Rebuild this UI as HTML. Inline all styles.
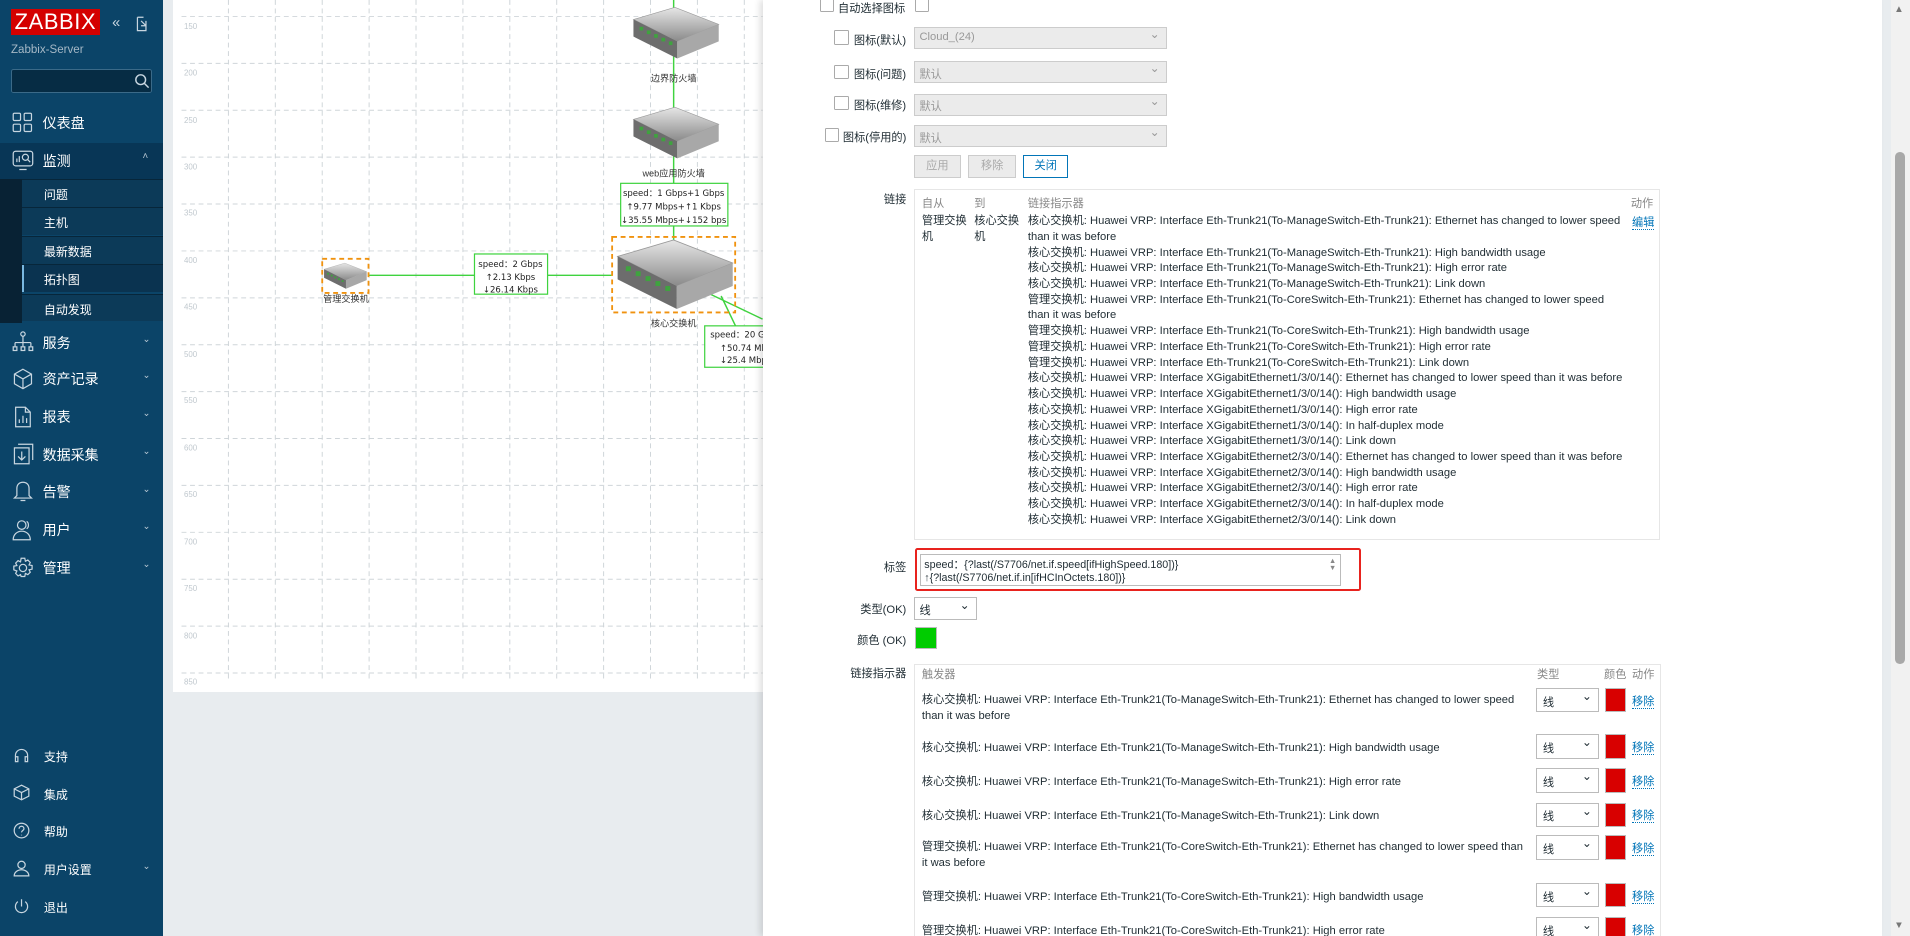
<!DOCTYPE html>
<html><head><meta charset="utf-8"><style>
html,body{margin:0;padding:0;overflow:hidden;background:#e8ecef;}
#w{zoom:1.21812;position:relative;width:1568px;height:768px;overflow:hidden;font-family:"Liberation Sans","Noto Sans CJK SC",sans-serif;font-size:9.85px;color:#1f2c33;background:#e8ecef;}
.a{position:absolute;white-space:nowrap;}
#sb{position:absolute;left:0;top:0;width:134px;height:768px;background:#0b4468;color:#fff;}
.mi{position:absolute;left:0;width:134px;height:30px;font-size:11.5px;}
.mi span{position:absolute;left:35px;top:7px;}
.mi svg{position:absolute;left:10px;top:6px;}
.mi .ch{position:absolute;left:117px;top:8px;font-size:8px;color:#b8c8d4;}
.sub{position:absolute;left:18px;width:116px;height:22px;background:#0c3a58;border-top:1px solid #07263a;font-size:9.85px;}
.sub span{position:absolute;left:18px;top:5px;}
.bm{position:absolute;left:0;width:134px;height:30px;font-size:9.85px;}
.bm span{position:absolute;left:36px;top:8px;}
.bm svg{position:absolute;left:11px;top:7px;}
#map{position:absolute;left:142px;top:0;width:484px;height:568px;background:#fff;}
#form{position:absolute;left:626px;top:0;width:919px;height:768px;background:#fff;box-shadow:-3px 0 5px rgba(0,0,0,.12);font-size:9.2px;}
.cb{position:absolute;width:10px;height:10px;border:1px solid #aaa;background:#fff;border-radius:1px;}
.sel{position:absolute;height:18px;border:1px solid #ccc;background:#ebebeb;color:#999;box-sizing:border-box;padding:3px 4px;}
.sel:after{content:"⌄";position:absolute;right:5px;top:-1px;font-size:10px;color:#999;}
.lbl{position:absolute;text-align:right;width:120px;}
.btn{position:absolute;height:19px;box-sizing:border-box;border:1px solid #ccc;background:#ebebeb;color:#aaa;text-align:center;line-height:17px;}
.tbl{position:absolute;border:1px solid #e6e6e6;background:#fff;}
.hd{color:#888;}
.lk{color:#0275b8;border-bottom:1px dotted #0275b8;}
.ws{position:absolute;height:20px;width:52px;border:1px solid #bbb;background:#fff;box-sizing:border-box;padding:4px 5px;}
.ws:after{content:"⌄";position:absolute;right:5px;top:0px;font-size:10px;}
.rq{position:absolute;width:17px;height:20px;background:#d80000;border:1px solid #bbb;box-sizing:border-box;}
</style></head><body><div id="w">

<div id="sb">
  <div class="a" style="left:9px;top:7px;width:73px;height:22px;background:#d40000;color:#fff;font-size:18px;line-height:22px;text-align:center;letter-spacing:0.5px;">ZABBIX</div>
  <div class="a" style="left:92px;top:12px;font-size:12px;color:#c8d6e0;">«</div>
  <svg class="a" style="left:111px;top:13px" width="11" height="13" viewBox="0 0 11 13" fill="none" stroke="#c8d6e0" stroke-width="1"><path d="M2 1h5M2 1v11h7V5M5 4l4 4M9 4v4H5"/></svg>
  <div class="a" style="left:9px;top:36px;font-size:9.5px;color:#a5b8c6;">Zabbix-Server</div>
  <div class="a" style="left:9px;top:57px;width:116px;height:19px;background:#062c44;border:1px solid #3b6a88;box-sizing:border-box;border-radius:2px;"></div>
  <svg class="a" style="left:110px;top:60px" width="13" height="13" viewBox="0 0 13 13" fill="none" stroke="#c8d6e0" stroke-width="1.2"><circle cx="5.5" cy="5.5" r="4"/><path d="M8.5 8.5l3.5 3.5"/></svg>

  <div class="mi" style="top:86px"><svg width="18" height="18" viewBox="0 0 18 18" fill="none" stroke="#c8d6e0"><rect x="1" y="1" width="6" height="6" rx="1"/><rect x="10" y="1" width="6" height="6" rx="1"/><rect x="1" y="10" width="6" height="6" rx="1"/><rect x="10" y="10" width="6" height="6" rx="1"/></svg><span>仪表盘</span></div>
  <div class="mi" style="top:117px;background:#083656;height:30px"><svg width="18" height="18" viewBox="0 0 18 18" fill="none" stroke="#c8d6e0"><rect x="1" y="1" width="16" height="12" rx="2"/><path d="M6 16h6M4 10V7M6 10V5"/><circle cx="11" cy="6" r="2.5"/><path d="M13 8l2 2"/></svg><span>监测</span><div class="ch" style="top:7px">˄</div></div>
  <div class="a" style="left:0;top:147px;width:18px;height:118px;background:#082234;"></div>
  <div class="sub" style="top:147px"><span>问题</span></div>
  <div class="sub" style="top:170px"><span>主机</span></div>
  <div class="sub" style="top:194px"><span>最新数据</span></div>
  <div class="sub" style="top:217px;background:#0a3350"><span>拓扑图</span><div class="a" style="left:0;top:0;width:2px;height:22px;background:#7ab8e0"></div></div>
  <div class="sub" style="top:241px"><span>自动发现</span></div>

  <div class="mi" style="top:266px"><svg width="18" height="18" viewBox="0 0 18 18" fill="none" stroke="#c8d6e0"><circle cx="9" cy="2.5" r="1.8"/><path d="M9 4.5v5M2.5 9.5h13M2.5 9.5v3M9 9.5v3M15.5 9.5v3"/><rect x="1" y="13" width="3" height="3"/><rect x="7.5" y="13" width="3" height="3"/><rect x="14" y="13" width="3" height="3"/></svg><span>服务</span><div class="ch">⌄</div></div>
  <div class="mi" style="top:296px"><svg width="18" height="18" viewBox="0 0 18 18" fill="none" stroke="#c8d6e0"><path d="M9 1l7 4v8l-7 4-7-4V5zM2 5l7 4 7-4M9 9v8"/></svg><span>资产记录</span><div class="ch">⌄</div></div>
  <div class="mi" style="top:327px"><svg width="18" height="18" viewBox="0 0 18 18" fill="none" stroke="#c8d6e0"><path d="M3 1h8l4 4v12H3zM11 1v4h4M6 14v-3M9 14V8M12 14v-4"/></svg><span>报表</span><div class="ch">⌄</div></div>
  <div class="mi" style="top:358px"><svg width="18" height="18" viewBox="0 0 18 18" fill="none" stroke="#c8d6e0"><path d="M2 4h12v13H2zM5 1h12v13M8 7v7M5 11l3 3 3-3"/></svg><span>数据采集</span><div class="ch">⌄</div></div>
  <div class="mi" style="top:389px"><svg width="18" height="18" viewBox="0 0 18 18" fill="none" stroke="#c8d6e0"><path d="M9 1c-3 0-5 2-5 5v6l-2 2h14l-2-2V6c0-3-2-5-5-5zM7 16h4"/></svg><span>告警</span><div class="ch">⌄</div></div>
  <div class="mi" style="top:420px"><svg width="18" height="18" viewBox="0 0 18 18" fill="none" stroke="#c8d6e0"><circle cx="8" cy="5" r="3.5"/><path d="M1 17c0-4 3-7 7-7s7 3 7 7zM12 2c2 1 2 5 0 6"/></svg><span>用户</span><div class="ch">⌄</div></div>
  <div class="mi" style="top:451px"><svg width="18" height="18" viewBox="0 0 18 18" fill="none" stroke="#c8d6e0"><circle cx="9" cy="9" r="3"/><path d="M7.5 1h3l.5 2.5 2-1 2 2-1 2 2.5.5v3l-2.5.5 1 2-2 2-2-1-.5 2.5h-3L7 14.5l-2 1-2-2 1-2L1.5 10.5v-3L4 7 3 5l2-2 2 1z"/></svg><span>管理</span><div class="ch">⌄</div></div>

  <div class="bm" style="top:606px"><svg width="14" height="14" viewBox="0 0 14 14" fill="none" stroke="#c8d6e0"><path d="M2 9V7a5 5 0 0110 0v2M2 8h2v4H2zM10 8h2v4h-2z"/></svg><span>支持</span></div>
  <div class="bm" style="top:637px"><svg width="14" height="14" viewBox="0 0 14 14" fill="none" stroke="#c8d6e0"><path d="M7 1l6 3v6l-6 3-6-3V4zM1 4l6 3 6-3M7 7v6"/></svg><span>集成</span></div>
  <div class="bm" style="top:668px"><svg width="14" height="14" viewBox="0 0 14 14" fill="none" stroke="#c8d6e0"><circle cx="7" cy="7" r="6"/><path d="M5 5.5a2 2 0 114 0c0 1.5-2 1.5-2 3M7 10.5v.5"/></svg><span>帮助</span></div>
  <div class="bm" style="top:699px"><svg width="14" height="14" viewBox="0 0 14 14" fill="none" stroke="#c8d6e0"><circle cx="7" cy="4" r="3"/><path d="M1 13c0-3 3-5 6-5s6 2 6 5z"/></svg><span>用户设置</span><div class="ch" style="position:absolute;left:117px;top:8px;font-size:8px;color:#b8c8d4">⌄</div></div>
  <div class="bm" style="top:730px"><svg width="14" height="14" viewBox="0 0 14 14" fill="none" stroke="#c8d6e0"><path d="M7 1v6M4 3a5 5 0 106 0"/></svg><span>退出</span></div>
</div>

<div id="map">
<svg width="484" height="568" style="position:absolute;left:0;top:0">
  <g stroke="#cfd5d9" stroke-dasharray="4,3" stroke-width="0.8">
    <path d="M7 13.5H484M7 52H484M7 90.5H484M7 129H484M7 167.5H484M7 206H484M7 244.5H484M7 283H484M7 321.5H484M7 360H484M7 398.5H484M7 437H484M7 475.5H484M7 514H484M7 552.5H484"/>
    <path d="M45.5 0V560M84 0V560M122.5 0V560M161 0V560M199.5 0V560M238 0V560M276.5 0V560M315 0V560M353.5 0V560M392 0V560M430.5 0V560M469 0V560"/>
  </g>
  <g font-size="6.5" fill="#c0c8ce" font-family="Liberation Sans">
    <text x="9" y="24">150</text><text x="9" y="62">200</text><text x="9" y="101">250</text><text x="9" y="139">300</text><text x="9" y="177">350</text><text x="9" y="216">400</text><text x="9" y="254">450</text><text x="9" y="293">500</text><text x="9" y="331">550</text><text x="9" y="370">600</text><text x="9" y="408">650</text><text x="9" y="447">700</text><text x="9" y="485">750</text><text x="9" y="524">800</text><text x="9" y="562">850</text>
  </g>
  <g stroke="#3fd33f" stroke-width="1.2" fill="none">
    <path d="M411 0V200M161 226H360M438 240L484 262M450 243L462 268"/>
  </g>
  <defs>
    <linearGradient id="g1" x1="0" y1="0" x2="0" y2="1"><stop offset="0" stop-color="#e6e6e6"/><stop offset="1" stop-color="#8a8a8a"/></linearGradient>
    <g id="sw">
      <path d="M378 16l34-10 36 14-34 14z" fill="url(#g1)" stroke="#999" stroke-width=".5"/>
      <path d="M378 16l36 18v14l-36-18z" fill="#6d6d6d"/>
      <path d="M414 34l34-14v14l-34 14z" fill="#a8a8a8"/>
      <g fill="#3fa33f"><rect x="383" y="22" width="3" height="3"/><rect x="389" y="25" width="3" height="3"/><rect x="395" y="28" width="3" height="3"/><rect x="401" y="31" width="3" height="3"/><rect x="407" y="34" width="3" height="3"/></g>
    </g>
  </defs>
  <use href="#sw"/>
  <use href="#sw" transform="translate(0,82)"/>
  <use href="#sw" transform="translate(365,197) scale(1.35) translate(-378,-6)"/>
  <use href="#sw" transform="translate(124,216) scale(0.5) translate(-378,-6)"/>
  <rect x="360.5" y="194.5" width="101" height="62" fill="none" stroke="#f0920f" stroke-width="1.5" stroke-dasharray="4,3"/>
  <rect x="122.5" y="212.5" width="38" height="28" fill="none" stroke="#f0920f" stroke-width="1.5" stroke-dasharray="4,3"/>
  <g font-size="7.5" fill="#333" text-anchor="middle" font-family="Liberation Sans,Noto Sans CJK SC">
    <text x="411" y="67">边界防火墙</text><text x="411" y="145">web应用防火墙</text><text x="411" y="268">核心交换机</text><text x="142" y="248">管理交换机</text>
  </g>
  <rect x="367.5" y="150.5" width="88" height="35" fill="#fff" stroke="#3fd33f"/>
  <rect x="247.5" y="208.5" width="60" height="33" fill="#fff" stroke="#3fd33f"/>
  <rect x="436.5" y="267.5" width="60" height="34" fill="#fff" stroke="#3fd33f"/>
  <g font-size="7" fill="#222" text-anchor="middle" font-family="DejaVu Sans,Noto Sans CJK SC">
    <text x="411" y="161">speed：1 Gbps+1 Gbps</text><text x="411" y="172">↑9.77 Mbps+↑1 Kbps</text><text x="411" y="183">↓35.55 Mbps+↓152 bps</text>
    <text x="277" y="219">speed：2 Gbps</text><text x="277" y="230">↑2.13 Kbps</text><text x="277" y="240">↓26.14 Kbps</text>
    <text x="441" y="277" text-anchor="start">speed：20 G</text><text x="449" y="288" text-anchor="start">↑50.74 Mb</text><text x="449" y="298" text-anchor="start">↓25.4 Mbp</text>
  </g>
</svg>
</div>

<div id="form">
  <div class="cb" style="left:47px;top:-2px"></div><div class="a" style="left:62px;top:0px">自动选择图标</div><div class="cb" style="left:125px;top:-2px"></div>

  <div class="cb" style="left:59px;top:25px"></div><div class="a" style="left:75px;top:26px">图标(默认)</div><div class="sel" style="left:124px;top:22px;width:208px">Cloud_(24)</div>
  <div class="cb" style="left:59px;top:53px"></div><div class="a" style="left:75px;top:54px">图标(问题)</div><div class="sel" style="left:124px;top:50px;width:208px">默认</div>
  <div class="cb" style="left:59px;top:79px"></div><div class="a" style="left:75px;top:80px">图标(维修)</div><div class="sel" style="left:124px;top:77px;width:208px">默认</div>
  <div class="cb" style="left:51px;top:105px"></div><div class="a" style="left:66px;top:106px">图标(停用的)</div><div class="sel" style="left:124px;top:103px;width:208px">默认</div>
  <div class="btn" style="left:124px;top:127px;width:39px">应用</div>
  <div class="btn" style="left:169px;top:127px;width:39px">移除</div>
  <div class="btn" style="left:214px;top:127px;width:37px;background:#fff;border-color:#0275b8;color:#0275b8">关闭</div>

  <div class="lbl" style="left:-2px;top:157px">链接</div>
  <div class="tbl" style="left:124px;top:155px;width:611px;height:287px">
    <div class="a hd" style="left:6px;top:4px">自从</div><div class="a hd" style="left:49px;top:4px">到</div><div class="a hd" style="left:93px;top:4px">链接指示器</div><div class="a hd" style="left:588px;top:4px">动作</div>
    <div class="a" style="left:6px;top:20px;line-height:12.9px">管理交换<br>机</div>
    <div class="a" style="left:49px;top:20px;line-height:12.9px">核心交换<br>机</div>
    <div class="a" style="left:589px;top:20px"><span class="lk">编辑</span></div>
    <div class="a" style="left:93px;top:20px;line-height:12.9px">核心交换机: Huawei VRP: Interface Eth-Trunk21(To-ManageSwitch-Eth-Trunk21): Ethernet has changed to lower speed<br>than it was before<br>核心交换机: Huawei VRP: Interface Eth-Trunk21(To-ManageSwitch-Eth-Trunk21): High bandwidth usage<br>核心交换机: Huawei VRP: Interface Eth-Trunk21(To-ManageSwitch-Eth-Trunk21): High error rate<br>核心交换机: Huawei VRP: Interface Eth-Trunk21(To-ManageSwitch-Eth-Trunk21): Link down<br>管理交换机: Huawei VRP: Interface Eth-Trunk21(To-CoreSwitch-Eth-Trunk21): Ethernet has changed to lower speed<br>than it was before<br>管理交换机: Huawei VRP: Interface Eth-Trunk21(To-CoreSwitch-Eth-Trunk21): High bandwidth usage<br>管理交换机: Huawei VRP: Interface Eth-Trunk21(To-CoreSwitch-Eth-Trunk21): High error rate<br>管理交换机: Huawei VRP: Interface Eth-Trunk21(To-CoreSwitch-Eth-Trunk21): Link down<br>核心交换机: Huawei VRP: Interface XGigabitEthernet1/3/0/14(): Ethernet has changed to lower speed than it was before<br>核心交换机: Huawei VRP: Interface XGigabitEthernet1/3/0/14(): High bandwidth usage<br>核心交换机: Huawei VRP: Interface XGigabitEthernet1/3/0/14(): High error rate<br>核心交换机: Huawei VRP: Interface XGigabitEthernet1/3/0/14(): In half-duplex mode<br>核心交换机: Huawei VRP: Interface XGigabitEthernet1/3/0/14(): Link down<br>核心交换机: Huawei VRP: Interface XGigabitEthernet2/3/0/14(): Ethernet has changed to lower speed than it was before<br>核心交换机: Huawei VRP: Interface XGigabitEthernet2/3/0/14(): High bandwidth usage<br>核心交换机: Huawei VRP: Interface XGigabitEthernet2/3/0/14(): High error rate<br>核心交换机: Huawei VRP: Interface XGigabitEthernet2/3/0/14(): In half-duplex mode<br>核心交换机: Huawei VRP: Interface XGigabitEthernet2/3/0/14(): Link down</div>
  </div>

  <div class="lbl" style="left:-2px;top:459px">标签</div>
  <div class="a" style="left:125px;top:450px;width:366px;height:35px;border:2px solid #e8231e;border-radius:2px;box-sizing:border-box;"></div>
  <div class="a" style="left:129px;top:455px;width:346px;height:26px;border:1px solid #bbb;box-sizing:border-box;padding:3px 3px;line-height:11px;font-size:8.8px;overflow:hidden;background:#fff">speed：{?last(/S7706/net.if.speed[ifHighSpeed.180])}<br>↑{?last(/S7706/net.if.in[ifHCInOctets.180])}</div>
  <div class="a" style="left:465px;top:457px;font-size:6px;color:#888;line-height:6px">▲<br>▼</div>

  <div class="lbl" style="left:-2px;top:493px">类型(OK)</div>
  <div class="ws" style="left:124px;top:490px;width:52px;height:19px;padding:3px 4px">线</div>
  <div class="lbl" style="left:-2px;top:519px">颜色 (OK)</div>
  <div class="a" style="left:125px;top:515px;width:18px;height:18px;background:#00cc00;border:1px solid #bbb;box-sizing:border-box"></div>

  <div class="lbl" style="left:-2px;top:546px">链接指示器</div>
  <div class="tbl" style="left:124px;top:545px;width:612px;height:240px">
    <div class="a hd" style="left:6px;top:1px">触发器</div><div class="a hd" style="left:511px;top:1px">类型</div><div class="a hd" style="left:566px;top:1px">颜色</div><div class="a hd" style="left:589px;top:1px">动作</div>
    <div class="a" style="left:6px;top:23px;line-height:13px">核心交换机: Huawei VRP: Interface Eth-Trunk21(To-ManageSwitch-Eth-Trunk21): Ethernet has changed to lower speed<br>than it was before</div>
    <div class="ws" style="left:510px;top:19px">线</div><div class="rq" style="left:567px;top:19px"></div><div class="a" style="left:589px;top:23px"><span class="lk">移除</span></div>
    <div class="a" style="left:6px;top:61px">核心交换机: Huawei VRP: Interface Eth-Trunk21(To-ManageSwitch-Eth-Trunk21): High bandwidth usage</div>
    <div class="ws" style="left:510px;top:57px">线</div><div class="rq" style="left:567px;top:57px"></div><div class="a" style="left:589px;top:61px"><span class="lk">移除</span></div>
    <div class="a" style="left:6px;top:89px">核心交换机: Huawei VRP: Interface Eth-Trunk21(To-ManageSwitch-Eth-Trunk21): High error rate</div>
    <div class="ws" style="left:510px;top:85px">线</div><div class="rq" style="left:567px;top:85px"></div><div class="a" style="left:589px;top:89px"><span class="lk">移除</span></div>
    <div class="a" style="left:6px;top:117px">核心交换机: Huawei VRP: Interface Eth-Trunk21(To-ManageSwitch-Eth-Trunk21): Link down</div>
    <div class="ws" style="left:510px;top:113px">线</div><div class="rq" style="left:567px;top:113px"></div><div class="a" style="left:589px;top:117px"><span class="lk">移除</span></div>
    <div class="a" style="left:6px;top:144px;line-height:13px">管理交换机: Huawei VRP: Interface Eth-Trunk21(To-CoreSwitch-Eth-Trunk21): Ethernet has changed to lower speed than<br>it was before</div>
    <div class="ws" style="left:510px;top:140px">线</div><div class="rq" style="left:567px;top:140px"></div><div class="a" style="left:589px;top:144px"><span class="lk">移除</span></div>
    <div class="a" style="left:6px;top:183px">管理交换机: Huawei VRP: Interface Eth-Trunk21(To-CoreSwitch-Eth-Trunk21): High bandwidth usage</div>
    <div class="ws" style="left:510px;top:179px">线</div><div class="rq" style="left:567px;top:179px"></div><div class="a" style="left:589px;top:183px"><span class="lk">移除</span></div>
    <div class="a" style="left:6px;top:211px">管理交换机: Huawei VRP: Interface Eth-Trunk21(To-CoreSwitch-Eth-Trunk21): High error rate</div>
    <div class="ws" style="left:510px;top:207px">线</div><div class="rq" style="left:567px;top:207px"></div><div class="a" style="left:589px;top:211px"><span class="lk">移除</span></div>
  </div>
</div>

<div class="a" style="left:1552px;top:0;width:16px;height:768px;background:#f1f1f1"></div>
<div class="a" style="left:1556px;top:125px;width:8px;height:420px;background:#a8a8a8;border-radius:4px"></div>
<div class="a" style="left:1555px;top:3px;font-size:8px;color:#777">▲</div>
<div class="a" style="left:1555px;top:755px;font-size:8px;color:#777">▼</div>
</div></body></html>
